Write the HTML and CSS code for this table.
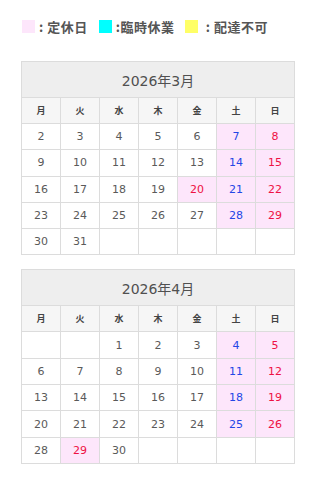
FILE: index.html
```html
<!DOCTYPE html>
<html lang="ja">
<head>
<meta charset="utf-8">
<link rel="stylesheet" href="styles.css">
</head>
<body>
<div class="page">
  <div class="legend">
    <span class="sw sw-pink"></span><span class="lbl">: 定休日</span>
    <span class="sw sw-cyan"></span><span class="lbl">:臨時休業</span>
    <span class="sw sw-yellow"></span><span class="lbl">&nbsp;: 配達不可</span>
  </div>

  <table class="cal">
    <tr><th class="title" colspan="7">2026年3月</th></tr>
    <tr class="wd"><th>月</th><th>火</th><th>水</th><th>木</th><th>金</th><th>土</th><th>日</th></tr>
    <tr><td>2</td><td>3</td><td>4</td><td>5</td><td>6</td><td class="off sat">7</td><td class="off sun">8</td></tr>
    <tr><td>9</td><td>10</td><td>11</td><td>12</td><td>13</td><td class="off sat">14</td><td class="off sun">15</td></tr>
    <tr><td>16</td><td>17</td><td>18</td><td>19</td><td class="off sun">20</td><td class="off sat">21</td><td class="off sun">22</td></tr>
    <tr><td>23</td><td>24</td><td>25</td><td>26</td><td>27</td><td class="off sat">28</td><td class="off sun">29</td></tr>
    <tr><td>30</td><td>31</td><td></td><td></td><td></td><td></td><td></td></tr>
  </table>

  <table class="cal">
    <tr><th class="title" colspan="7">2026年4月</th></tr>
    <tr class="wd"><th>月</th><th>火</th><th>水</th><th>木</th><th>金</th><th>土</th><th>日</th></tr>
    <tr><td></td><td></td><td>1</td><td>2</td><td>3</td><td class="off sat">4</td><td class="off sun">5</td></tr>
    <tr><td>6</td><td>7</td><td>8</td><td>9</td><td>10</td><td class="off sat">11</td><td class="off sun">12</td></tr>
    <tr><td>13</td><td>14</td><td>15</td><td>16</td><td>17</td><td class="off sat">18</td><td class="off sun">19</td></tr>
    <tr><td>20</td><td>21</td><td>22</td><td>23</td><td>24</td><td class="off sat">25</td><td class="off sun">26</td></tr>
    <tr><td>28</td><td class="off sun">29</td><td>30</td><td></td><td></td><td></td><td></td></tr>
  </table>
</div>
</body>
</html>
```

FILE: styles.css
```css
html, body {
  margin: 0;
  padding: 0;
  background: #fff;
}
.page {
  padding: 19px 16px 0 21px;
  font-family: "DejaVu Sans", "Noto Sans CJK JP", sans-serif;
  color: #555;
}
.legend {
  display: flex;
  align-items: center;
  height: 14px;
  margin-bottom: 28px;
  font-family: "Noto Sans CJK JP", sans-serif;
  font-weight: bold;
  font-size: 13px;
  color: #555;
}
.sw {
  display: inline-block;
  width: 13px;
  height: 13px;
  margin-left: 1px;
}
.sw-pink { background: #fde6fb; }
.sw-cyan { background: #00ffff; margin-left: 11px; }
.sw-yellow { background: #ffff66; margin-left: 11px; }
.lbl {
  margin-left: 4px;
  letter-spacing: 0.5px;
}
.cal {
  width: 274px;
  border-collapse: collapse;
  table-layout: fixed;
  margin-bottom: 14px;
}
.cal th, .cal td {
  border: 1px solid #dcdcdc;
  text-align: center;
  padding: 0;
}
.cal .title {
  height: 35px;
  background: #eeeeee;
  font-weight: normal;
  font-size: 14px;
  color: #505050;
  font-family: "DejaVu Sans", "Noto Sans CJK JP", sans-serif;
}
.cal .wd th {
  height: 25px;
  background: #f6f6f6;
  font-size: 9px;
  font-weight: bold;
  color: #444;
  font-family: "Noto Sans CJK JP", sans-serif;
}
.cal td {
  height: 25.3px;
  font-size: 11px;
  color: #5a5a5a;
}
.cal td.off { background: #fde6fb; }
.cal td.sat { color: #2446e6; }
.cal td.sun { color: #ee1144; }
```
